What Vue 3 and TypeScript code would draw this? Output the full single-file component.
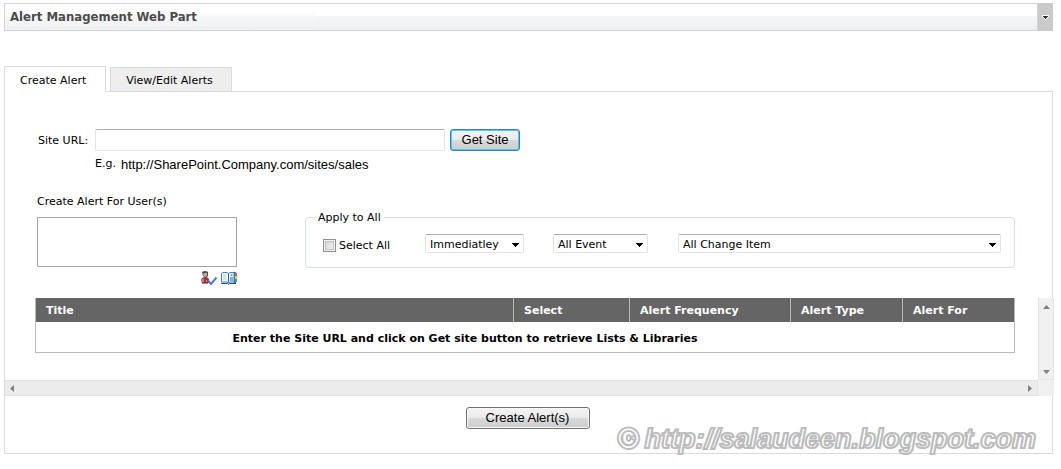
<script setup lang="ts">
import { ref } from 'vue'

interface Column {
  name: string
  cls: string
}

const columns: Column[] = [
  { name: 'Title', cls: 'c-title' },
  { name: 'Select', cls: 'c-select' },
  { name: 'Alert Frequency', cls: 'c-frequency' },
  { name: 'Alert Type', cls: 'c-type' },
  { name: 'Alert For', cls: 'c-for' },
]

const tabs = ['Create Alert', 'View/Edit Alerts']
const activeTab = ref(0)
const siteUrl = ref('')
const users = ref('')
const selectAll = ref(false)
const frequency = ref('Immediatley')
const eventType = ref('All Event')
const changeType = ref('All Change Item')
</script>

<template>
  <main class="page">
    <header class="bar">
      <h1 class="bar-title">Alert Management Web Part</h1>
      <button class="bar-menu" type="button" aria-label="Web part menu">
        <svg width="7" height="5" viewBox="0 0 7 5" shape-rendering="crispEdges">
          <path d="M0 0h7v2H6v1H5v1H4v1H3V4H2V3H1V2H0z" fill="#fff" />
          <path d="M1 1h5v1H5v1H4v1H3V3H2V2H1z" fill="#333" />
        </svg>
      </button>
    </header>

    <nav class="tabs" role="tablist">
      <button
        v-for="(tab, i) in tabs"
        :key="tab"
        type="button"
        role="tab"
        class="tab"
        :class="{ active: activeTab === i }"
        :aria-selected="activeTab === i"
        @click="activeTab = i"
      >{{ tab }}</button>
    </nav>

    <section class="panel">
      <form class="form" @submit.prevent>
        <div class="url-row">
          <label for="site-url">Site URL:</label>
          <input id="site-url" v-model="siteUrl" class="url" type="text" />
          <button class="btn focused" type="submit">Get Site</button>
        </div>
        <p class="hint"><span>E.g.</span><span class="sample">http://SharePoint.Company.com/sites/sales</span></p>

        <div class="options">
          <div class="people">
            <label for="users">Create Alert For User(s)</label>
            <textarea id="users" v-model="users"></textarea>
            <div class="people-tools">
              <button type="button" class="tool" aria-label="Check names">
                <svg width="16" height="15" viewBox="0 0 16 15">
                  <path d="M0 8.500Q1 6 4 6t4 2v4H1z" fill="#a8323c" />
                  <path d="M1 8h2v3H1zM5 9h1v2H5z" fill="#d98288" />
                  <path d="M1 12h6" stroke="#64252a" />
                  <path d="M1 1Q4-1 7 1v4L5 7 2 5z" fill="#505050" />
                  <path d="M3 2h3v3L4 6 2 4z" fill="#b9aaa5" />
                  <path d="M7 9.500l3 3.500 5.500-6.500" fill="none" stroke="#4a7ad4" stroke-width="2" />
                </svg>
              </button>
              <button type="button" class="tool" aria-label="Browse">
                <svg width="16" height="15" viewBox="0 0 16 15">
                  <path d="M13 1h2v11h-2z" fill="#2f6fae" />
                  <path d="M.5 2.500L2 1.500h4l1.500 1 1.500-1h4v9.500H9l-1.500 1L6 11H.5z" fill="#f3faff" stroke="#3f82c4" />
                  <path d="M7.500 2.500v9" stroke="#27649f" />
                  <path d="M2 4h3M2 6h3M2 8h3" stroke="#a9cfec" />
                  <path d="M9.500 3h2v2h-2zM9 6h3v4H9z" fill="#74aedb" />
                  <path d="M14 2h2v3h-2z" fill="#dc5540" />
                  <path d="M14 5h2v3h-2z" fill="#eec94a" />
                  <path d="M14 8h2v3h-2z" fill="#449e70" />
                  <path d="M0 12.500h6.500l1 1 1-1H15" fill="none" stroke="#164a80" />
                </svg>
              </button>
            </div>
          </div>

          <fieldset class="apply">
            <legend>Apply to All</legend>
            <div class="apply-row">
              <label class="check"><input v-model="selectAll" type="checkbox" /><span>Select All</span></label>
              <div class="drop drop-frequency">
                <select v-model="frequency" aria-label="Alert frequency">
                  <option>Immediatley</option>
                  <option>Daily</option>
                  <option>Weekly</option>
                </select>
                <svg class="arrow" width="7" height="4" viewBox="0 0 7 4" shape-rendering="crispEdges"><path d="M0 0h7v1H6v1H5v1H4v1H3V3H2V2H1V1H0z" /></svg>
              </div>
              <div class="drop drop-event">
                <select v-model="eventType" aria-label="Event type">
                  <option>All Event</option>
                </select>
                <svg class="arrow" width="7" height="4" viewBox="0 0 7 4" shape-rendering="crispEdges"><path d="M0 0h7v1H6v1H5v1H4v1H3V3H2V2H1V1H0z" /></svg>
              </div>
              <div class="drop drop-change">
                <select v-model="changeType" aria-label="Change type">
                  <option>All Change Item</option>
                </select>
                <svg class="arrow" width="7" height="4" viewBox="0 0 7 4" shape-rendering="crispEdges"><path d="M0 0h7v1H6v1H5v1H4v1H3V3H2V2H1V1H0z" /></svg>
              </div>
            </div>
          </fieldset>
        </div>
      </form>

      <div class="scroller">
        <div class="viewport">
          <table>
            <thead>
              <tr>
                <th v-for="c in columns" :key="c.name" :class="c.cls" scope="col">{{ c.name }}</th>
              </tr>
            </thead>
            <tbody>
              <tr>
                <td :colspan="columns.length">Enter the Site URL and click on Get site button to retrieve Lists &amp; Libraries</td>
              </tr>
            </tbody>
          </table>
        </div>
        <div class="track vertical">
          <button type="button" aria-label="Scroll up"><svg width="7" height="4" viewBox="0 0 7 4"><path d="M0 4L3.500 0 7 4z" /></svg></button>
          <button type="button" aria-label="Scroll down"><svg width="7" height="4" viewBox="0 0 7 4"><path d="M0 0L3.500 4 7 0z" /></svg></button>
        </div>
        <div class="track horizontal">
          <button type="button" aria-label="Scroll left"><svg width="4" height="7" viewBox="0 0 4 7"><path d="M4 0L0 3.500 4 7z" /></svg></button>
          <button type="button" aria-label="Scroll right"><svg width="4" height="7" viewBox="0 0 4 7"><path d="M0 0L4 3.500 0 7z" /></svg></button>
        </div>
        <div class="corner"></div>
      </div>

      <div class="submit">
        <button class="btn wide" type="button">Create Alert(s)</button>
      </div>
      <div class="watermark"><span class="copy">©</span><span>http://salaudeen.blogspot.com</span></div>
    </section>
  </main>
</template>

<style>
body {
  margin: 0;
  background: #fff;
}
</style>

<style scoped>
* {
  box-sizing: border-box;
}

.page {
  padding: 3px 8px 15px 4px;
  font: 11px/16px Verdana, "DejaVu Sans", sans-serif;
  color: #000;
}

button,
input,
select,
textarea {
  margin: 0;
  font: inherit;
  color: inherit;
}

.bar {
  display: flex;
  height: 28px;
  border: 1px solid #d2d3d5;
  border-right: 0;
  background: linear-gradient(#fff 0 12px, #f5f6f8 12px, #eeeff1);
}

.bar-title {
  width: 310px;
  margin: 0;
  padding-left: 5px;
  font: bold 13px/26px Tahoma, "DejaVu Sans Condensed", "DejaVu Sans", sans-serif;
  color: #4c4c4c;
  background: linear-gradient(#fff 0 8px, #f5f6f8 14px, #eeeff1);
}

.bar-menu {
  display: flex;
  align-items: center;
  justify-content: center;
  width: 16px;
  margin: -1px 0 -1px auto;
  padding: 0;
  border: 0;
  border-left: 1px solid #d2d3d5;
  background: #cacaca;
}

.tabs {
  display: flex;
  align-items: flex-end;
  gap: 4px;
  margin-top: 35px;
}

.tab {
  height: 24px;
  padding: 2px 18px 0 15px;
  border: 1px solid #dbdbdb;
  border-bottom: 0;
  background: #eee;
}

.tab.active {
  z-index: 1;
  height: 26px;
  padding-right: 19px;
  margin-bottom: -1px;
  background: #fff;
}

.panel {
  position: relative;
  padding-bottom: 24px;
  border: 1px solid #dbdbdb;
}

.form {
  padding: 37px 37px 12px 32px;
}

.url-row {
  display: flex;
  align-items: center;
}

.url-row label {
  width: 58px;
  padding: 2px 0 0 1px;
  white-space: nowrap;
}

.url {
  width: 350px;
  height: 22px;
  margin-right: 5px;
  border: 1px solid #e2e3ea;
  border-top-color: #abadb3;
  border-radius: 2px;
  outline: 0;
}

.btn {
  width: 70px;
  height: 22px;
  padding: 0;
  border: 1px solid #707070;
  border-radius: 3px;
  background: linear-gradient(#f3f3f3, #ebebeb 50%, #dadada 50%, #cdcdcd);
  box-shadow: inset 0 0 0 1px #f8f8f8;
  font: 13px/18px "Liberation Sans", Arial, sans-serif;
}

.btn.focused {
  border-color: #3c7fb1;
  box-shadow: inset 0 0 0 1px #48cdf4;
}

.btn.wide {
  width: 124px;
}

.hint {
  display: flex;
  gap: 5px;
  margin: 5px 0 21px;
  padding-left: 58px;
}

.sample {
  font: 13px/18px "Liberation Sans", Arial, sans-serif;
  height: 16px;
}

.options {
  display: flex;
  align-items: flex-start;
  gap: 68px;
}

.people {
  width: 200px;
}

.people label {
  display: block;
  line-height: 18px;
}

.people textarea {
  display: block;
  width: 100%;
  height: 50px;
  margin-top: 6px;
  border: 1px solid #a5a5a5;
  outline: 0;
  resize: none;
}

.people-tools {
  display: flex;
  justify-content: flex-end;
  gap: 4px;
  margin-top: 4px;
}

.tool {
  display: flex;
  padding: 0;
  border: 0;
  background: none;
}

.apply {
  flex: 1;
  min-width: 0;
  margin: 14px 0 0;
  padding: 7px 13px 14px 9px;
  border: 1px solid #d5dfe5;
  border-radius: 4px;
}

.apply legend {
  padding: 2px 3px 0;
  line-height: 18px;
}

.apply-row {
  display: flex;
  align-items: flex-start;
}

.check {
  display: flex;
  align-items: center;
  gap: 3px;
  width: 102px;
  height: 19px;
  margin-left: 8px;
  padding-top: 3px;
}

.check span {
  padding-top: 2px;
}

.check input {
  width: 13px;
  height: 13px;
  margin: 0;
  appearance: none;
  border: 1px solid #8e8f8f;
  background: linear-gradient(135deg, #cbcfd5, #f6f6f6);
  box-shadow: inset 0 0 0 1px #f4f4f4, inset 0 0 0 2px #bcc0c6;
}

.drop {
  position: relative;
  height: 19px;
}

.drop select {
  display: block;
  width: 100%;
  height: 19px;
  padding: 2px 16px 0 4px;
  appearance: none;
  border: 1px solid #e2e3ea;
  border-top-color: #abadb3;
  border-radius: 2px;
  background: #fff;
  line-height: 15px;
}

.arrow {
  position: absolute;
  top: 9px;
  right: 5px;
  pointer-events: none;
}

.drop-frequency {
  width: 99px;
}

.drop-event {
  width: 95px;
  margin-left: 29px;
}

.drop-change {
  flex: 1;
  margin-left: 30px;
}

.scroller {
  display: grid;
  grid-template: 82px 16px / 1fr 16px;
  margin-right: -2px;
}

.viewport {
  padding: 0 23px 0 30px;
  overflow: hidden;
}

table {
  width: 100%;
  table-layout: fixed;
  border-collapse: separate;
  border-spacing: 0;
  border: 1px solid #b9b9b9;
  border-top: 0;
  font-weight: bold;
}

th {
  height: 24px;
  padding: 1px 10px 0;
  background: #656565;
  color: #fff;
  text-align: left;
}

th + th {
  border-left: 1px solid #b9b9b9;
}

.c-select {
  width: 116px;
}

.c-frequency {
  width: 161px;
}

.c-type,
.c-for {
  width: 112px;
}

td {
  height: 30px;
  padding: 3px 120px 0 0;
  text-align: center;
}

.track {
  display: flex;
  justify-content: space-between;
  border: 1px solid #e3e3e3;
  background: #ececec;
}

.track button {
  display: flex;
  align-items: center;
  justify-content: center;
  width: 14px;
  height: 14px;
  padding: 0;
  border: 0;
  background: none;
}

.track path {
  fill: #808080;
}

.vertical {
  flex-direction: column;
  padding-top: 2px;
  border-top: 0;
  background: #f0f0f0;
}

.horizontal {
  border-left: 0;
}

.corner {
  background: #f0f0f0;
}

.submit {
  display: flex;
  justify-content: center;
  padding: 11px 2px 0 0;
}

.watermark {
  position: absolute;
  right: 16px;
  bottom: -1px;
  display: flex;
  gap: 6px;
  font: italic bold 27px/30px "Liberation Sans", Arial, sans-serif;
  color: #fff;
  white-space: nowrap;
  -webkit-text-stroke: 2px #bcbcbc;
  text-shadow: 0 0 2px #bcbcbc;
  pointer-events: none;
}

.copy {
  font-style: normal;
  paint-order: stroke fill;
  -webkit-text-stroke: 4px #bcbcbc;
  text-shadow: none;
}
</style>
